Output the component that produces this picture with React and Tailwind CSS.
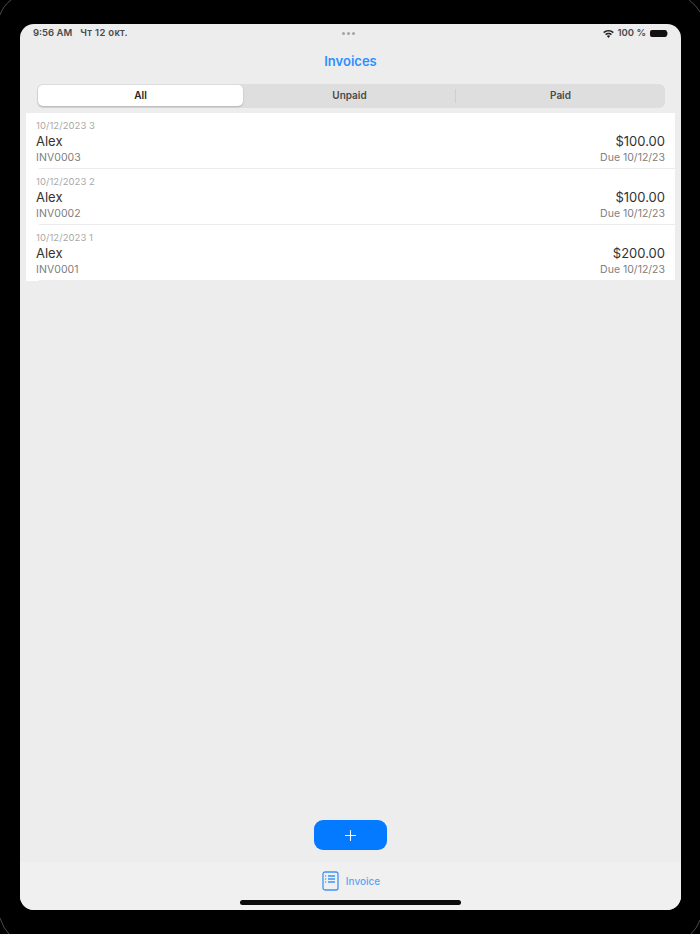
import React from "react";
import { Plus } from "lucide-react";

const invoices = [
  { date: "10/12/2023 3", name: "Alex", num: "INV0003", amount: "$100.00", due: "Due 10/12/23" },
  { date: "10/12/2023 2", name: "Alex", num: "INV0002", amount: "$100.00", due: "Due 10/12/23" },
  { date: "10/12/2023 1", name: "Alex", num: "INV0001", amount: "$200.00", due: "Due 10/12/23" },
];

const BezelCorners = () => (
  <svg className="absolute inset-0 pointer-events-none" width="700" height="934" fill="none" stroke="#4a4a4a" strokeWidth="1">
    <path d="M0 15 Q3 6 11 0" />
    <path d="M689 0 Q696 5 700 12" />
    <path d="M0 918 Q3 928 9 934" />
    <path d="M691 934 Q697 928 700 920" />
  </svg>
);

const StatusBar = () => (
  <div className="relative flex items-center justify-between h-[17px] mt-[1px] pl-[13px] pr-[13px] text-[9.5px] font-semibold text-[#4a4a4a]">
    <div className="flex gap-2">
      <span>9:56 AM</span>
      <span className="tracking-[0.3px]">Чт 12 окт.</span>
    </div>
    <div className="absolute left-[322px] top-[7px] flex gap-[2px]">
      <span className="w-[3px] h-[3px] rounded-full bg-[#a5a5a5]" />
      <span className="w-[3px] h-[3px] rounded-full bg-[#a5a5a5]" />
      <span className="w-[3px] h-[3px] rounded-full bg-[#a5a5a5]" />
    </div>
    <div className="flex items-center gap-1">
      <svg width="11" height="8" viewBox="0 0 11 8" fill="#222222">
        <path d="M5.5 0C3.4 0 1.6.8.2 2.1l1 1.1C2.3 2.1 3.8 1.5 5.5 1.5s3.2.6 4.3 1.7l1-1.1C9.4.8 7.6 0 5.5 0z" />
        <path d="M5.5 2.7c-1.3 0-2.5.5-3.4 1.4l1 1.1c.6-.6 1.5-1 2.4-1s1.8.4 2.4 1l1-1.1c-.9-.9-2.1-1.4-3.4-1.4z" />
        <path d="M5.5 5.3c-.7 0-1.2.2-1.6.7L5.5 8l1.6-2c-.4-.5-.9-.7-1.6-.7z" />
      </svg>
      <span>100 %</span>
      <div className="flex items-center">
        <div className="w-[17px] h-[7px] rounded-[2px] bg-[#111111]" />
        <div className="w-px h-[3px] bg-[#999999]" />
      </div>
    </div>
  </div>
);

const Segments = () => (
  <div className="ml-[17px] mr-[16px] mt-[14px] h-[24px] rounded-[6px] bg-[#dedede] flex items-center pl-[1px] pb-px text-[10px] font-semibold text-[#4a4a4a]">
    <div className="w-[205px] h-[21px] rounded-[5px] bg-white shadow-[0_1px_2px_rgba(0,0,0,0.2)] flex items-center justify-center text-[#222222]">All</div>
    <div className="w-[212px] pl-[1px] flex items-center justify-center">Unpaid</div>
    <div className="w-px h-[14px] bg-[#cfcfcf]" />
    <div className="flex-1 flex items-center justify-center">Paid</div>
  </div>
);

const Row = ({ inv }) => (
  <div className="h-[56px] pl-[10px] pr-[10px] pt-[7px] relative">
    <div className="text-[9.5px] leading-[12px] tracking-[0.05px] text-[#a9a9a9]">{inv.date}</div>
    <div className="flex justify-between items-center mt-[1px] h-[18px] text-[13px] text-[#333333]">
      <span>{inv.name}</span>
      <span>{inv.amount}</span>
    </div>
    <div className="flex justify-between items-center text-[10.5px] leading-[14px] text-[#808080]">
      <span className="tracking-[0.1px]">{inv.num}</span>
      <span>{inv.due}</span>
    </div>
    <div className="absolute left-[13px] right-0 bottom-0 h-px bg-[#ececec]" />
  </div>
);

export default function App() {
  return (
    <div className="relative w-[700px] h-[934px] bg-black pl-5 pt-6 font-['Inter','Liberation_Sans',sans-serif] overflow-hidden">
      <BezelCorners />
      <div className="relative w-[661px] h-[886px] rounded-[14px] bg-[#ededed] overflow-hidden flex flex-col">
        <StatusBar />
        <div className="mt-[10px] text-center text-[13px] leading-[18px] font-semibold text-[#2f8fff]">Invoices</div>
        <Segments />
        <div className="mx-[6px] mt-[5px] bg-white">
          {invoices.map((inv) => (
            <Row key={inv.num} inv={inv} />
          ))}
        </div>
        <div className="flex-1 flex items-end justify-center pb-[12px]">
          <button className="w-[73px] h-[30px] rounded-[9px] bg-[#037aff] flex items-center justify-center text-white">
            <Plus size={17} strokeWidth={1.5} />
          </button>
        </div>
        <div className="relative h-[48px] bg-[#f0f0f0] flex justify-center pt-[9px]">
          <div className="flex items-start gap-[7px] ml-[1px]">
            <svg width="17" height="20" viewBox="0 0 17 20" fill="none" stroke="#3d94f5" strokeWidth="1.3">
              <rect x="1" y="1" width="15" height="18" rx="2" />
              <path d="M6 5h7M6 8h7M6 11h7" />
              <path d="M3.2 5h1M3.2 8h1M3.2 11h1" />
            </svg>
            <span className="text-[10px] leading-[20px] font-medium text-[#5aa5f5]">Invoice</span>
          </div>
          <div className="absolute left-[220px] bottom-[5px] w-[221px] h-[5px] rounded-full bg-[#0a0a0a]" />
        </div>
      </div>
    </div>
  );
}
